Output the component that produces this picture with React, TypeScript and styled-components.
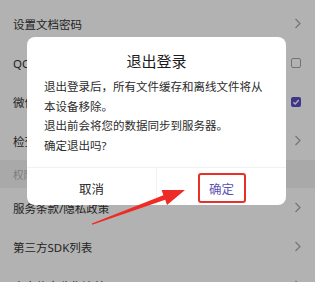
import styled, { createGlobalStyle } from 'styled-components';

const GlobalStyle = createGlobalStyle`
  html, body {
    margin: 0;
    padding: 0;
    background: #ffffff;
    font-family: "Noto Sans", "Noto Sans CJK SC", sans-serif;
    overflow: hidden;
  }
  * {
    box-sizing: border-box;
  }
`;

interface Row {
  label: string;
  kind: 'arrow' | 'check' | 'checked';
}

const topRows: Row[] = [
  { label: '设置文档密码', kind: 'arrow' },
  { label: 'QQ文件自动导入', kind: 'check' },
  { label: '微信文件自动导入', kind: 'checked' },
  { label: '检查更新', kind: 'arrow' },
];

const bottomRows: Row[] = [
  { label: '服务条款/隐私政策', kind: 'arrow' },
  { label: '第三方SDK列表', kind: 'arrow' },
  { label: '个人信息收集清单', kind: 'arrow' },
];

function Chevron() {
  return (
    <svg width='8' height='11' viewBox='0 0 8 11' fill='none'>
      <path d='M1.5 1 L6 5.5 L1.5 10' stroke='#a8a8a8' strokeWidth='1.2' />
    </svg>
  );
}

function RowEnd({ kind }: { kind: Row['kind'] }) {
  if (kind === 'arrow') return <Chevron />;
  return (
    <CheckBox $checked={kind === 'checked'}>
      {kind === 'checked' && (
        <svg width='8' height='8' viewBox='0 0 8 8' fill='none'>
          <path d='M1.3 4.2 L3.2 6 L6.8 2' stroke='#fff' strokeWidth='1.3' />
        </svg>
      )}
    </CheckBox>
  );
}

export default function App() {
  return (
    <>
      <GlobalStyle />
      <SettingsList>
        {topRows.map((row) => (
          <SettingRow key={row.label}>
            <span>{row.label}</span>
            <RowEnd kind={row.kind} />
          </SettingRow>
        ))}
        <SectionHeader>权限设置</SectionHeader>
        {bottomRows.map((row) => (
          <SettingRow key={row.label}>
            <span>{row.label}</span>
            <RowEnd kind={row.kind} />
          </SettingRow>
        ))}
      </SettingsList>

      <Mask>
        <Dialog>
          <DialogTitle>退出登录</DialogTitle>
          <DialogBody>
            退出登录后，所有文件缓存和离线文件将从
            <br />
            本设备移除。
            <br />
            退出前会将您的数据同步到服务器。
            <br />
            确定退出吗?
          </DialogBody>
          <BtnBox>
            <DialogBtn type='button'>取消</DialogBtn>
            <DialogBtn type='button' $primary>
              确定
              <Highlight />
            </DialogBtn>
          </BtnBox>
        </Dialog>
      </Mask>

      {/* red annotation arrow pointing at the confirm button */}
      <ArrowMark width='315' height='282' viewBox='0 0 315 282'>
        <polygon
          points='91.8,223.4 163.4,195.2 161.6,190 185,190 167,205 165.2,199.8 92.2,224.8'
          fill='#ee2b24'
        />
      </ArrowMark>
    </>
  );
}

const SettingsList = styled.div`
  padding-top: 4px;
  display: flex;
  flex-direction: column;
`;

const SettingRow = styled.div`
  height: 39px;
  padding: 0 13px 0 13px;
  display: flex;
  align-items: center;
  justify-content: space-between;
  font-size: 11.5px;
  color: #333333;
  background: #ffffff;
`;

const SectionHeader = styled.div`
  height: 28px;
  padding: 0 13px;
  display: flex;
  align-items: center;
  font-size: 10.5px;
  color: #b4b4b4;
  background: #f3f3f3;
`;

const CheckBox = styled.div<{ $checked: boolean }>`
  width: 10px;
  height: 10px;
  margin-right: 1px;
  border-radius: 2px;
  display: flex;
  align-items: center;
  justify-content: center;
  border: ${({ $checked }) => ($checked ? 'none' : '1px solid #a6a6a6')};
  background: ${({ $checked }) => ($checked ? '#5a4bc6' : '#ffffff')};
`;

const Mask = styled.div`
  position: fixed;
  inset: 0;
  background: rgba(0, 0, 0, 0.3);
  display: flex;
  justify-content: center;
  align-items: flex-start;
  padding-top: 37px;
  padding-right: 2px;
`;

const Dialog = styled.div`
  width: 259px;
  height: 168px;
  border-radius: 8px;
  background: #ffffff;
  display: flex;
  flex-direction: column;
`;

const DialogTitle = styled.h2`
  margin: 14px 0 0;
  font-size: 15px;
  line-height: 20px;
  font-weight: 400;
  text-align: center;
  color: #1c1c1c;
`;

const DialogBody = styled.p`
  margin: 6px 0 0;
  padding: 0 16px 0 17px;
  font-size: 11.5px;
  line-height: 19.7px;
  color: #2c2c2c;
  white-space: nowrap;
`;

const BtnBox = styled.div`
  margin-top: auto;
  height: 38px;
  display: flex;
  border-top: 1px solid #f1f1f1;
`;

const DialogBtn = styled.button<{ $primary?: boolean }>`
  position: relative;
  flex: 1;
  padding: 3px 0 0;
  border: none;
  background: transparent;
  font-family: inherit;
  font-size: 12.5px;
  color: ${({ $primary }) => ($primary ? '#5d52b6' : '#2c2c2c')};
  & + & {
    border-left: 1px solid #f1f1f1;
  }
`;

const Highlight = styled.span`
  position: absolute;
  left: 50%;
  top: 5px;
  width: 48px;
  height: 30px;
  margin-left: -24px;
  border: 2px solid #e8302a;
  border-radius: 3px;
`;

const ArrowMark = styled.svg`
  position: fixed;
  left: 0;
  top: 0;
  pointer-events: none;
`;
